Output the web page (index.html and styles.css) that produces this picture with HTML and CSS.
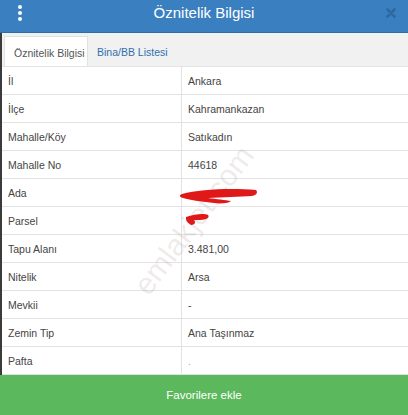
FILE: index.html
```
<!DOCTYPE html>
<html lang="tr">
<head>
    <meta charset="UTF-8">
    <meta name="viewport" content="width=device-width, initial-scale=1.0">
    <title>Öznitelik Bilgisi</title>
    <link rel="stylesheet" href="styles.css">
</head>
<body>
    <div class="modal">
        <div class="modal-header">
            <span class="menu-dots"><i></i><i></i><i></i></span>
            <h1>Öznitelik Bilgisi</h1>
            <svg class="close" width="10" height="10" viewBox="0 0 10 10">
                <path d="M1.5 1.5 L8.5 8.5 M8.5 1.5 L1.5 8.5" stroke="#2c6399" stroke-width="2.6" stroke-linecap="round"/>
            </svg>
        </div>

        <div class="modal-body">
            <ul class="tabs">
                <li class="tab active">Öznitelik Bilgisi</li>
                <li class="tab">Bina/BB Listesi</li>
            </ul>

            <div class="table-wrap">
                <table class="info">
                    <tr><td>İl</td><td>Ankara</td></tr>
                    <tr><td>İlçe</td><td>Kahramankazan</td></tr>
                    <tr><td>Mahalle/Köy</td><td>Satıkadın</td></tr>
                    <tr><td>Mahalle No</td><td>44618</td></tr>
                    <tr><td>Ada</td><td></td></tr>
                    <tr><td>Parsel</td><td></td></tr>
                    <tr><td>Tapu Alanı</td><td>3.481,00</td></tr>
                    <tr><td>Nitelik</td><td>Arsa</td></tr>
                    <tr><td>Mevkii</td><td>-</td></tr>
                    <tr><td>Zemin Tip</td><td>Ana Taşınmaz</td></tr>
                    <tr><td>Pafta</td><td class="muted">.</td></tr>
                </table>

                <div class="watermark">emlakjet.com</div>

                <!-- karalamalar -->
                <svg class="scribble" width="408" height="308" viewBox="0 0 408 308">
                    <path d="M182 127 C200 122 232 121 256 123 C258 125 257 128 252 129 C240 130 222 130 208 131 C216 132 226 133 231 134 C229 136 222 137 214 136 C204 135 190 133 183 131 C179 130 179 128 182 127 Z" fill="#e01818"/>
                    <path d="M186 150 C195 147 204 146 208 148 C210 150 207 153 200 153 C197 153 195 153 194 153 C196 155 195 158 191 158 C188 156 186 154 186 152 Z" fill="#e01818"/>
                </svg>
            </div>
        </div>

        <button class="fav-btn">Favorilere ekle</button>
    </div>
</body>
</html>
```

FILE: styles.css
```
body {
    margin: 0;
    font-family: 'Liberation Sans', Arial, sans-serif;
    color: #333;
    background: #fff;
}
.modal {
    width: 408px;
    height: 415px;
    display: flex;
    flex-direction: column;
    overflow: hidden;
}
.modal-header {
    height: 32px;
    background-color: #3a7fc0;
    border-bottom: 1px solid #2e6da4;
    display: flex;
    align-items: center;
    position: relative;
}
.modal-header h1 {
    flex: 1;
    margin: 0 0 6px;
    text-align: center;
    font-size: 15px;
    font-weight: normal;
    color: #fff;
}
.menu-dots {
    position: absolute;
    left: 18px;
    top: 5px;
    display: flex;
    flex-direction: column;
    gap: 2px;
}
.menu-dots i {
    width: 4px;
    height: 4px;
    border-radius: 50%;
    background: #fff;
}
.close {
    position: absolute;
    right: 12px;
    top: 8px;
    opacity: 0.8;
}
.modal-body {
    flex: 1;
    border-left: 2px solid #3b3b3b;
    display: flex;
    flex-direction: column;
}
.tabs {
    list-style: none;
    margin: 0;
    padding: 3px 0 0 2px;
    height: 30px;
    background-color: #f1f1f1;
    display: flex;
    border-bottom: 1px solid #e4e4e4;
}
.tab {
    padding: 10px 9px 0;
    font-size: 10.5px;
    color: #2f6fad;
}
.tab.active {
    background: #fff;
    color: #555;
    border: 1px solid #e2e2e2;
    border-bottom: none;
    width: 64px;
    white-space: nowrap;
}
.table-wrap {
    position: relative;
    flex: 1;
}
.info {
    width: 100%;
    border-collapse: collapse;
    font-size: 10.5px;
}
.info td {
    height: 26px;
    padding: 1px 0 0 6px;
    border-bottom: 1px solid #e2e2e2;
    color: #444;
}
.info td:first-child {
    width: 173px;
    border-right: 1px solid #e2e2e2;
}
.info td.muted {
    color: #aaa;
}
.scribble {
    position: absolute;
    left: -2px;
    top: 0;
}
.watermark {
    position: absolute;
    left: 103px;
    top: 135px;
    width: 180px;
    font-size: 30px;
    line-height: 34px;
    color: rgba(170, 150, 150, 0.2);
    transform: rotate(-53deg);
    white-space: nowrap;
    pointer-events: none;
}
.fav-btn {
    height: 41px;
    border: none;
    background-color: #5cb85c;
    color: #fff;
    font-family: 'Liberation Sans', Arial, sans-serif;
    font-size: 11.5px;
    width: 100%;
}
```
